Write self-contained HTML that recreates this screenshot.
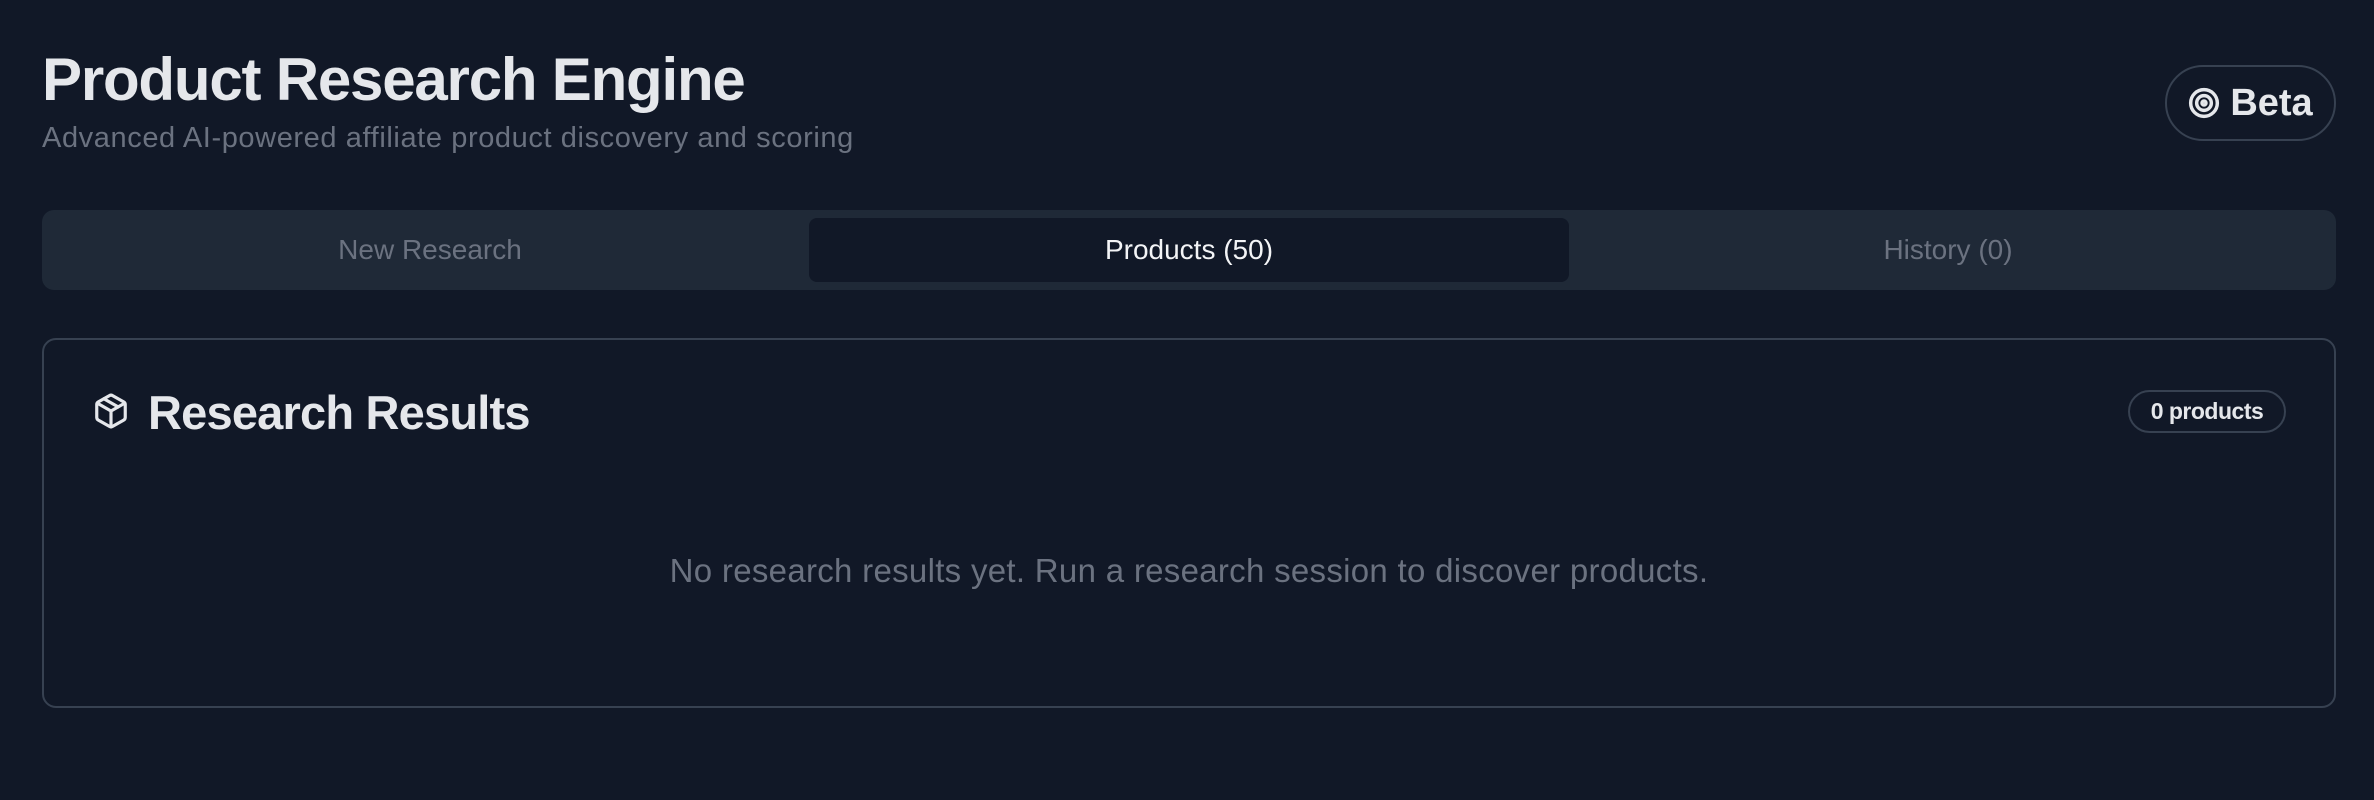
<!DOCTYPE html>
<html><head><meta charset="utf-8"><style>
*{box-sizing:border-box;margin:0;padding:0}
body{width:2374px;height:800px;background:#111827;font-family:"Liberation Sans",sans-serif;color:#e5e7eb;position:relative;overflow:hidden}
.title{position:absolute;left:42px;top:44px;font-size:60px;font-weight:bold;letter-spacing:-1.2px;color:#e5e7eb;line-height:72px}
.sub{position:absolute;left:42px;top:118px;font-size:29px;color:#6b7280;line-height:40px;letter-spacing:0.6px}
.beta{position:absolute;left:2165px;top:65px;width:171px;height:76px;border:2px solid #374151;border-radius:38px;display:flex;align-items:center;justify-content:center;gap:10px;font-size:38px;font-weight:bold;color:#e5e7eb}
.tabs{position:absolute;left:42px;top:210px;width:2294px;height:80px;background:#1f2937;border-radius:12px}
.tab{position:absolute;top:8px;height:64px;width:760px;display:flex;align-items:center;justify-content:center;font-size:28px;color:#6b7280}
.tab.on{background:#111827;color:#f3f4f6;border-radius:8px}
.card{position:absolute;left:42px;top:338px;width:2294px;height:370px;border:2px solid #374151;border-radius:14px}
.h{position:absolute;left:148px;top:378px;font-size:47px;font-weight:bold;letter-spacing:-0.8px;line-height:70px;color:#e5e7eb}
.pill{position:absolute;left:2128px;top:390px;width:158px;height:43px;border:2px solid #374151;border-radius:22px;display:flex;align-items:center;justify-content:center;font-size:23px;font-weight:bold;letter-spacing:-0.5px;color:#e5e7eb}
.empty{position:absolute;left:42px;width:2294px;top:548px;text-align:center;font-size:33px;letter-spacing:0.3px;color:#6b7280;line-height:46px}
</style></head><body>
<div class="title">Product Research Engine</div>
<div class="sub">Advanced AI-powered affiliate product discovery and scoring</div>
<div class="beta"><svg width="32" height="32" viewBox="0 0 24 24" fill="none" stroke="#e5e7eb" stroke-width="2.6"><circle cx="12" cy="12" r="10"/><circle cx="12" cy="12" r="5.5"/><circle cx="12" cy="12" r="1.5"/></svg>Beta</div>
<div class="tabs">
<div class="tab" style="left:8px">New Research</div>
<div class="tab on" style="left:767px">Products (50)</div>
<div class="tab" style="left:1526px">History (0)</div>
</div>
<div class="card"></div>
<svg style="position:absolute;left:92px;top:392px" width="38" height="38" viewBox="0 0 24 24" fill="none" stroke="#e5e7eb" stroke-width="2" stroke-linejoin="round" stroke-linecap="round"><path d="M21 8a2 2 0 0 0-1-1.73l-7-4a2 2 0 0 0-2 0l-7 4A2 2 0 0 0 3 8v8a2 2 0 0 0 1 1.73l7 4a2 2 0 0 0 2 0l7-4A2 2 0 0 0 21 16Z"/><path d="m3.3 7 8.7 5 8.7-5"/><path d="M12 22V12"/><path d="m7.5 4.27 9 5.15"/></svg>
<div class="h">Research Results</div>
<div class="pill">0 products</div>
<div class="empty">No research results yet. Run a research session to discover products.</div>
</body></html>
